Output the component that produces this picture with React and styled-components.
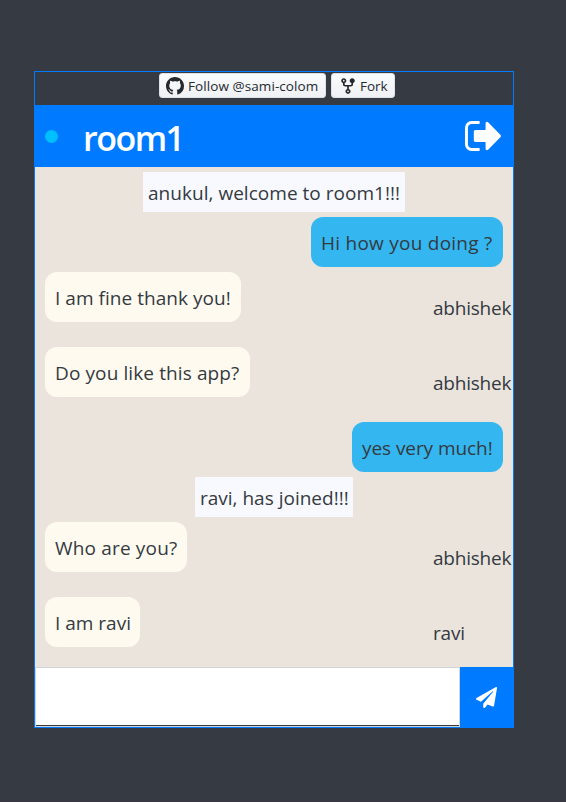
import React from "react";
import styled, { createGlobalStyle } from "styled-components";
import { FaPaperPlane } from "react-icons/fa";

const GlobalStyle = createGlobalStyle`
  *, *::before, *::after { box-sizing: border-box; }
  html, body { margin: 0; background: #343a40; }
  body { font-family: "Open Sans", "Noto Sans", sans-serif; font-size: 20px; color: #343a40; }
`;

const Page = styled.main`
  height: 802px;
  padding: 71px 52px 0 34px;
  background: #363a43;
  border-bottom: 1px solid #3b3540;
`;

const ChatFrame = styled.section`
  width: 480px;
  height: 657px;
  border: 1px solid #007bff;
  display: flex;
  flex-direction: column;
`;

const GithubBar = styled.div`
  height: 33px;
  padding: 1px 0 0 124px;
  display: flex;
  align-items: flex-start;
  gap: 5px;
`;

const GithubButton = styled.a`
  width: ${(p) => p.$width}px;
  height: 25px;
  border-radius: 3px;
  border: 1px solid #dfe2e5;
  background: linear-gradient(#fafbfc, #eff1f4);
  color: #24292e;
  font-size: 13.5px;
  font-weight: 500;
  letter-spacing: ${(p) => p.$spacing}px;
  white-space: nowrap;
  display: flex;
  align-items: center;
  padding-left: ${(p) => p.$pad}px;
  gap: ${(p) => p.$gap}px;
`;

const Header = styled.header`
  height: 62px;
  background: #007bff;
  color: #fff;
  display: flex;
  align-items: center;
  padding: 0 12px 0 10px;
`;

const OnlineDot = styled.span`
  width: 13px;
  height: 13px;
  border-radius: 50%;
  background: #00bfff;
  margin-right: 25px;
`;

const RoomName = styled.h1`
  margin: 3px auto 0 0;
  font-size: 34px;
  line-height: 44px;
  font-weight: 600;
  letter-spacing: -1.5px;
`;

const Messages = styled.div`
  height: 500px;
  background: #ebe4dd;
  padding-top: 5px;
  display: flex;
  flex-direction: column;
  overflow: hidden;
`;

const Label = styled.span`
  font-size: 19px;
  line-height: 30px;
  white-space: nowrap;
  letter-spacing: ${(p) => p.$spacing || 0}px;
`;

const Notice = styled.div`
  flex: none;
  width: ${(p) => p.$width}px;
  height: 40px;
  margin: 0 auto 5px;
  padding: 6px 5px;
  background: #f8f9ff;
  display: flex;
`;

const Row = styled.div`
  flex: none;
  display: flex;
  height: ${(p) => (p.$mine ? 55 : 75)}px;
  padding: 0 10px;
  justify-content: ${(p) => (p.$mine ? "flex-end" : "flex-start")};
`;

const Bubble = styled.div`
  width: ${(p) => p.$width}px;
  height: 50px;
  padding: 11px 10px;
  border-radius: 12px;
  background: ${(p) => (p.$mine ? "#34b7f1" : "#fffaf0")};
  display: flex;
`;

const Sender = styled.div`
  width: 70px;
  margin: 21px 0 0 auto;
`;

const Composer = styled.form`
  height: 60px;
  display: flex;
`;

const InputWrap = styled.div`
  width: 425px;
  border: 1px solid #ced4da;
  display: flex;
`;

const MessageInput = styled.input`
  width: 100%;
  border: 0;
  border-bottom: 1px solid #343a40;
  outline: 0;
  padding: 0 10px;
  font: inherit;
  background: #fff;
`;

const SendButton = styled.button`
  flex: 1;
  border: 0;
  padding: 1px 0 0;
  background: #007bff;
  color: #fff;
  display: flex;
  align-items: center;
  justify-content: center;
`;

const messages = [
  { kind: "notice", text: "anukul, welcome to room1!!!", width: 262, spacing: 0.03 },
  { kind: "mine", text: "Hi how you doing ?", width: 192, spacing: 0.25 },
  { kind: "other", text: "I am fine thank you!", width: 196, sender: "abhishek", spacing: 0.04 },
  { kind: "other", text: "Do you like this app?", width: 205, sender: "abhishek", spacing: 0.11 },
  { kind: "mine", text: "yes very much!", width: 151, spacing: -0.07 },
  { kind: "notice", text: "ravi, has joined!!!", width: 158, spacing: 0 },
  { kind: "other", text: "Who are you?", width: 142, sender: "abhishek", spacing: 0.17 },
  { kind: "other", text: "I am ravi", width: 95, sender: "ravi", spacing: 0 },
];

function Message({ kind, text, width, sender, spacing }) {
  if (kind === "notice") {
    return <Notice $width={width}><Label $spacing={spacing}>{text}</Label></Notice>;
  }
  const mine = kind === "mine";
  return (
    <Row $mine={mine}>
      <Bubble $mine={mine} $width={width}><Label $spacing={spacing}>{text}</Label></Bubble>
      {sender && <Sender><Label $spacing={-0.22}>{sender}</Label></Sender>}
    </Row>
  );
}

function GithubMark() {
  return (
    <svg width="18" height="18" viewBox="0 0 16 16" fill="currentColor">
      <path d="M8 0C3.58 0 0 3.58 0 8c0 3.54 2.29 6.53 5.47 7.59.4.07.55-.17.55-.38 0-.19-.01-.82-.01-1.49-2.01.37-2.53-.49-2.69-.94-.09-.23-.48-.94-.82-1.13-.28-.15-.68-.52-.01-.53.63-.01 1.08.58 1.23.82.72 1.21 1.87.87 2.33.66.07-.52.28-.87.51-1.07-1.78-.2-3.64-.89-3.64-3.95 0-.87.31-1.59.82-2.15-.08-.2-.36-1.02.08-2.12 0 0 .67-.21 2.2.82.64-.18 1.32-.27 2-.27s1.36.09 2 .27c1.53-1.04 2.2-.82 2.2-.82.44 1.1.16 1.92.08 2.12.51.56.82 1.27.82 2.15 0 3.07-1.87 3.75-3.65 3.95.29.25.54.73.54 1.48 0 1.07-.01 1.93-.01 2.2 0 .21.15.46.55.38A8.01 8.01 0 0 0 16 8c0-4.42-3.58-8-8-8z" />
    </svg>
  );
}

function ForkIcon() {
  return (
    <svg width="18" height="18" viewBox="0 0 16 16" fill="currentColor">
      <path d="M5 3.25a.75.75 0 11-1.5 0 .75.75 0 011.5 0zm0 2.122a2.25 2.25 0 10-1.5 0v.878A2.25 2.25 0 005.75 8.5h1.5v2.128a2.251 2.251 0 101.5 0V8.5h1.5a2.25 2.25 0 002.25-2.25v-.878a2.25 2.25 0 10-1.5 0v.878a.75.75 0 01-.75.75h-4.5A.75.75 0 015 6.25v-.878zm3.75 7.378a.75.75 0 11-1.5 0 .75.75 0 011.5 0zm3-8.75a.75.75 0 100-1.5.75.75 0 000 1.5z" />
    </svg>
  );
}

function LeaveIcon() {
  return (
    <svg width="36" height="30" viewBox="0 0 1568 1280" preserveAspectRatio="none" fill="currentColor">
      <path transform="translate(0 -256)" d="M640 1440q0 4 1 20t.5 26.5-3 23.5-10 19.5-20.5 6.5h-320q-119 0-203.5-84.5t-84.5-203.5v-704q0-119 84.5-203.5t203.5-84.5h320q13 0 22.5 9.5t9.5 22.5q0 4 1 20t.5 26.5-3 23.5-10 19.5-20.5 6.5h-320q-66 0-113 47t-47 113v704q0 66 47 113t113 47h312l11.5 1 11.5 3 8 5.5 7 9 2 13.5zm928-544q0 26-19 45l-544 544q-19 19-45 19t-45-19-19-45v-288h-448q-26 0-45-19t-19-45v-384q0-26 19-45t45-19h448v-288q0-26 19-45t45-19 45 19l544 544q19 19 19 45z" />
    </svg>
  );
}

export default function App() {
  return (
    <>
      <GlobalStyle />
      <Page>
        <ChatFrame>
          <GithubBar>
            <GithubButton $width={167} $pad={6} $gap={4} $spacing={0.08}>
              <GithubMark /><span>Follow @sami-colom</span>
            </GithubButton>
            <GithubButton $width={64} $pad={7} $gap={3} $spacing={0}>
              <ForkIcon /><span>Fork</span>
            </GithubButton>
          </GithubBar>
          <Header>
            <OnlineDot />
            <RoomName>room1</RoomName>
            <LeaveIcon />
          </Header>
          <Messages>
            {messages.map((m) => <Message key={m.text} {...m} />)}
          </Messages>
          <Composer>
            <InputWrap><MessageInput aria-label="Message" /></InputWrap>
            <SendButton type="button" aria-label="Send"><FaPaperPlane size={21} /></SendButton>
          </Composer>
        </ChatFrame>
      </Page>
    </>
  );
}
